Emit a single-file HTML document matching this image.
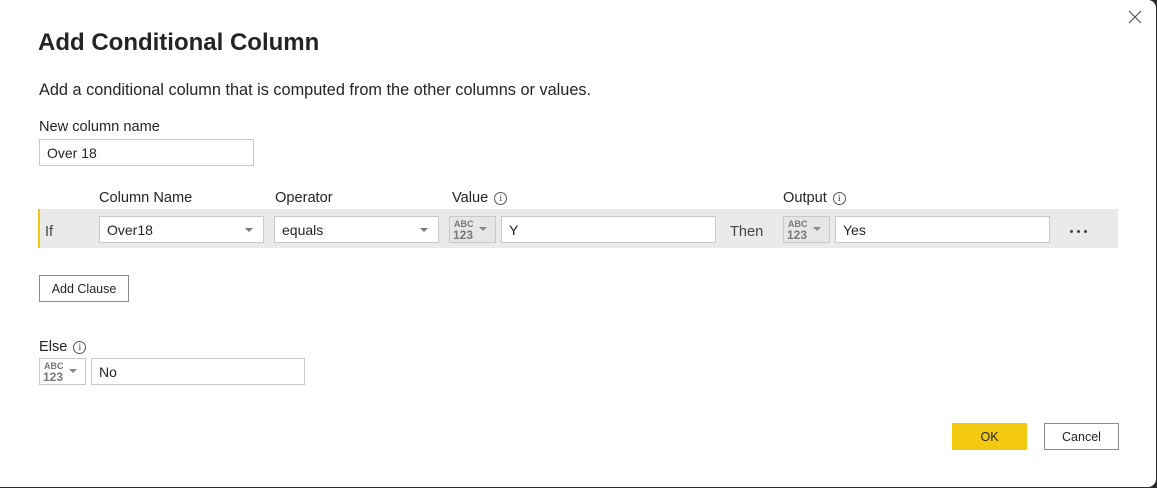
<!DOCTYPE html>
<html><head><meta charset="utf-8"><style>
*{box-sizing:border-box;margin:0;padding:0}
body{width:1157px;height:488px;background:#2b2b2b;font-family:"Segoe UI","Liberation Sans",sans-serif;color:#252423;overflow:hidden;position:relative}
.dlg{position:absolute;left:0;top:0;width:1156px;height:487px;background:#fff;border-radius:0 8px 8px 0}
.a{position:absolute;white-space:nowrap}
.inp{position:absolute;background:#fff;border:1px solid #c8c8c8;font-size:14px;padding-left:7px;line-height:26px;height:27px}
.dd::after{content:"";position:absolute;right:10px;top:11px;border-left:4px solid transparent;border-right:4px solid transparent;border-top:4px solid #777}
.typ{position:absolute;width:47px;height:27px;border:1px solid #c8c8c8;background:#e6e6e6}
.typ .t{position:absolute;left:4px;top:3px;font-size:9px;font-weight:bold;color:#777;line-height:9px;font-family:"Liberation Sans",sans-serif}
.typ .n{position:absolute;left:3px;top:12px;font-size:12px;font-weight:bold;color:#777;line-height:12px;font-family:"Liberation Sans",sans-serif}
.typ::after{content:"";position:absolute;right:8px;top:10px;border-left:4px solid transparent;border-right:4px solid transparent;border-top:4px solid #888}
.i{display:inline-block;width:13px;height:13px;border:1px solid #555;border-radius:50%;font-size:9px;line-height:11px;text-align:center;vertical-align:middle;margin-left:6px;font-family:"Liberation Serif",serif}
.lbl{font-size:14.6px}
.dot{position:absolute;width:3px;height:3px;border-radius:50%;background:#444;top:230px}
</style></head><body><div class="dlg">
<svg class="a" style="left:1128px;top:10px" width="14" height="14"><path d="M1 1L13 13M13 1L1 13" stroke="#555" stroke-width="1.2"/></svg>
<div class="a" style="left:38px;top:29px;font-size:24px;font-weight:600;color:#252423">Add Conditional Column</div>
<div class="a" style="left:39px;top:81px;font-size:16.3px">Add a conditional column that is computed from the other columns or values.</div>
<div class="a lbl" style="left:39px;top:119px">New column name</div>
<div class="inp" style="left:39px;top:139px;width:215px">Over 18</div>
<div class="a lbl" style="left:99px;top:190px">Column Name</div>
<div class="a lbl" style="left:275px;top:190px">Operator</div>
<div class="a lbl" style="left:452px;top:190px">Value<span class="i">i</span></div>
<div class="a lbl" style="left:783px;top:190px">Output<span class="i">i</span></div>
<div class="a" style="left:38px;top:209px;width:1080px;height:39px;background:#eaeaea;border-left:2px solid #f2c811"></div>
<div class="a lbl" style="left:45px;top:224px;color:#444">If</div>
<div class="inp dd" style="left:99px;top:216px;width:165px">Over18</div>
<div class="inp dd" style="left:274px;top:216px;width:165px">equals</div>
<div class="typ" style="left:449px;top:216px"><div class="t">ABC</div><div class="n">123</div></div>
<div class="inp" style="left:501px;top:216px;width:215px">Y</div>
<div class="a lbl" style="left:730px;top:224px;color:#444">Then</div>
<div class="typ" style="left:783px;top:216px"><div class="t">ABC</div><div class="n">123</div></div>
<div class="inp" style="left:835px;top:216px;width:215px">Yes</div>
<div class="dot" style="left:1070px"></div><div class="dot" style="left:1077px"></div><div class="dot" style="left:1084px"></div>
<div class="a" style="left:39px;top:275px;width:90px;height:27px;border:1px solid #8a8a8a;font-size:12.5px;text-align:center;line-height:26px">Add Clause</div>
<div class="a lbl" style="left:39px;top:339px">Else<span class="i">i</span></div>
<div class="typ" style="left:39px;top:358px;background:#fff"><div class="t">ABC</div><div class="n">123</div></div>
<div class="inp" style="left:91px;top:358px;width:214px">No</div>
<div class="a" style="left:952px;top:423px;width:75px;height:27px;background:#f2c811;font-size:12.5px;text-align:center;line-height:28px">OK</div>
<div class="a" style="left:1044px;top:423px;width:75px;height:27px;border:1px solid #8a8a8a;font-size:12.5px;text-align:center;line-height:26px">Cancel</div>
</div></body></html>
